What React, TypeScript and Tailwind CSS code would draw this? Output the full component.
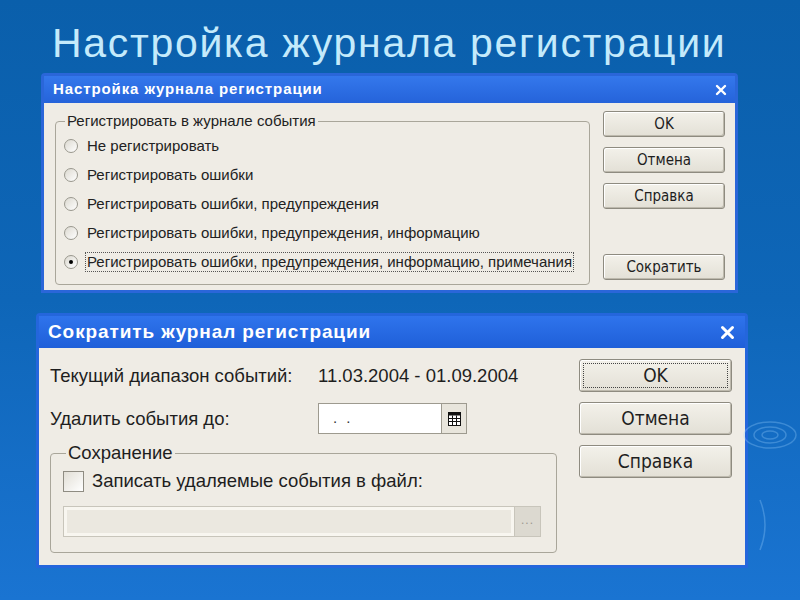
import clsx from "clsx";

const sans = "font-['Liberation_Sans',Arial,sans-serif]";
const narrow = "font-['Liberation_Sans_Narrow','DejaVu_Sans_Condensed',Arial,sans-serif]";

const CloseIcon = ({ size }: { size: number }) => (
    <svg width={size} height={size} viewBox="0 0 12 12">
        <path d="M2 2 L10 10 M10 2 L2 10" stroke="#fff" strokeWidth="2.4" strokeLinecap="round" />
    </svg>
);

const CalendarIcon = () => (
    <svg width="13" height="14" viewBox="0 0 13 14">
        <rect x="0.5" y="0.5" width="12" height="13" fill="#fff" stroke="#111" />
        <rect x="0.5" y="0.5" width="12" height="3" fill="#111" />
        <path d="M0.5 6.5 H12.5 M0.5 9.5 H12.5 M4.5 3.5 V13.5 M8.5 3.5 V13.5" stroke="#111" />
    </svg>
);

const Button = ({ label, className, focused }: { label: string; className?: string; focused?: boolean }) => (
    <div
        className={clsx(
            "relative flex items-center justify-center rounded-[3px] border border-[#8e8b80] bg-linear-to-b from-[#f3f1ea] to-[#e3e0d6] shadow-[inset_1px_1px_0_#fff,inset_-1px_-1px_0_#bdb9ad] text-[#1e1e1e]",
            narrow,
            className
        )}
    >
        {focused && <span className="absolute inset-[3px] border border-dotted border-[#444]" />}
        {label}
    </div>
);

const Radio = ({ checked }: { checked?: boolean }) => (
    <span className="flex h-[14px] w-[14px] items-center justify-center rounded-full border border-[#9a988e] bg-linear-to-br from-[#dcd9d0] to-white">
        {checked && <span className="h-[4px] w-[4px] rounded-full bg-black" />}
    </span>
);

const levels = [
    "Не регистрировать",
    "Регистрировать ошибки",
    "Регистрировать ошибки, предупреждения",
    "Регистрировать ошибки, предупреждения, информацию",
    "Регистрировать ошибки, предупреждения, информацию, примечания",
];

const SettingsDialog = () => (
    <div className="ml-[41px] flex h-[220px] w-[697px] flex-col rounded-t-[4px] border-[3px] border-[#2a66d9] bg-[#2a66d9]">
        <div className="flex h-[27px] items-center justify-between bg-linear-to-b from-[#3478ec] to-[#2563da] pl-[9px] pr-[8px]">
            <span className={clsx("text-[15px] font-bold tracking-[0.9px] text-white", sans)}>Настройка журнала регистрации</span>
            <CloseIcon size={12} />
        </div>
        <div className="flex flex-1 gap-[13px] bg-[#efece5] pl-[11px] pr-[10px] pt-[8px]">
            <fieldset className="mt-[2px] h-[172px] w-[535px] rounded-[4px] border border-[#a9a69a] pl-[8px]">
                <legend className={clsx("ml-[1px] px-[2px] text-[15px] leading-[16px] text-[#222]", sans)}>
                    Регистрировать в журнале события
                </legend>
                <div className="flex flex-col pt-[2px]">
                    {levels.map((label, i) => (
                        <div key={label} className="flex h-[29px] items-center gap-[7px]">
                            <Radio checked={i === levels.length - 1} />
                            <span
                                className={clsx(
                                    "px-[1px] text-[15px] leading-[18px] text-[#222]",
                                    sans,
                                    i === levels.length - 1 ? "border border-dotted border-[#555]" : "border border-transparent"
                                )}
                            >
                                {label}
                            </span>
                        </div>
                    ))}
                </div>
            </fieldset>
            <div className="flex w-[122px] flex-col text-[15px]">
                <Button label="OK" className="h-[26px]" />
                <Button label="Отмена" className="mt-[10px] h-[26px]" />
                <Button label="Справка" className="mt-[10px] h-[26px]" />
                <Button label="Сократить" className="mt-[45px] h-[26px]" />
            </div>
        </div>
    </div>
);

const TrimDialog = () => (
    <div className="ml-[36px] mt-[20px] flex h-[255px] w-[712px] flex-col rounded-t-[4px] border-[3px] border-[#2466dc] bg-[#2466dc]">
        <div className="flex h-[32px] items-center justify-between bg-linear-to-b from-[#2f74ec] to-[#1f5fd9] pl-[9px] pr-[10px]">
            <span className={clsx("text-[19px] font-bold tracking-[0.9px] text-white", sans)}>Сократить журнал регистрации</span>
            <CloseIcon size={15} />
        </div>
        <div className={clsx("flex flex-1 gap-[22px] bg-[#efece5] pl-[11px] pr-[13px] pt-[11px] text-[18.5px] text-[#1e1e1e]", sans)}>
            <div className="flex w-[507px] flex-col pt-[1px]">
                <div className="flex h-[32px] items-center">
                    <span className="w-[268px]">Текущий диапазон событий:</span>
                    <span>11.03.2004 - 01.09.2004</span>
                </div>
                <div className="mt-[11px] flex h-[31px] items-center">
                    <span className="w-[268px]">Удалить события до:</span>
                    <div className="flex h-full">
                        <div className="flex w-[124px] items-center border border-[#9d9a8f] bg-white pl-[14px] text-[15px] tracking-[9px] text-[#333]">..</div>
                        <div className="flex w-[25px] items-center justify-center border border-l-0 border-[#9d9a8f] bg-[#e8e5dc]">
                            <CalendarIcon />
                        </div>
                    </div>
                </div>
                <fieldset className="mt-[9px] h-[110px] rounded-[4px] border border-[#a9a69a] pl-[12px]">
                    <legend className="ml-[3px] px-[2px] leading-[20px]">Сохранение</legend>
                    <div className="mt-[7px] flex h-[22px] items-center gap-[8px]">
                        <span className="h-[21px] w-[21px] border border-[#8f8c82] bg-linear-to-br from-[#e2dfd6] to-white" />
                        <span>Записать удаляемые события в файл:</span>
                    </div>
                    <div className="mt-[14px] flex h-[31px] w-[478px]">
                        <div className="flex-1 border border-[#c8c5bb] bg-[#ebe8e0] shadow-[inset_0_0_0_3px_#f8f6f0]" />
                        <div className="flex w-[26px] items-center justify-center border border-l-0 border-[#c8c5bb] bg-[#dcd9d0] pb-[4px] text-[12px] tracking-[1px] text-[#9b988f]">
                            ...
                        </div>
                    </div>
                </fieldset>
            </div>
            <div className="flex w-[153px] flex-col text-[19px]">
                <Button label="OK" focused className="h-[33px] border-[#6f6d65]" />
                <Button label="Отмена" className="mt-[10px] h-[33px]" />
                <Button label="Справка" className="mt-[10px] h-[33px]" />
            </div>
        </div>
    </div>
);

export default function App() {
    return (
        <div className={clsx("relative h-[600px] w-[800px] overflow-hidden bg-linear-to-b from-[#0a5fab] via-[#0e66b8] to-[#1a74d2]", sans)}>
            {/* faint water ripples in the backdrop */}
            <svg className="absolute left-[740px] top-[405px] opacity-30" width="60" height="150" viewBox="0 0 60 150">
                <g fill="none" stroke="#9cd2ff" strokeWidth="1.5">
                    <ellipse cx="30" cy="30" rx="8" ry="4" />
                    <ellipse cx="30" cy="30" rx="16" ry="8" />
                    <ellipse cx="30" cy="30" rx="26" ry="13" />
                    <path d="M20 95 Q30 120 20 145" />
                </g>
            </svg>
            <h1 className="h-[73px] pl-[52px] pt-[18px] text-[41px] font-normal leading-[50px] tracking-[1.7px] text-[#c4eafb]">
                Настройка журнала регистрации
            </h1>
            <SettingsDialog />
            <TrimDialog />
        </div>
    );
}
